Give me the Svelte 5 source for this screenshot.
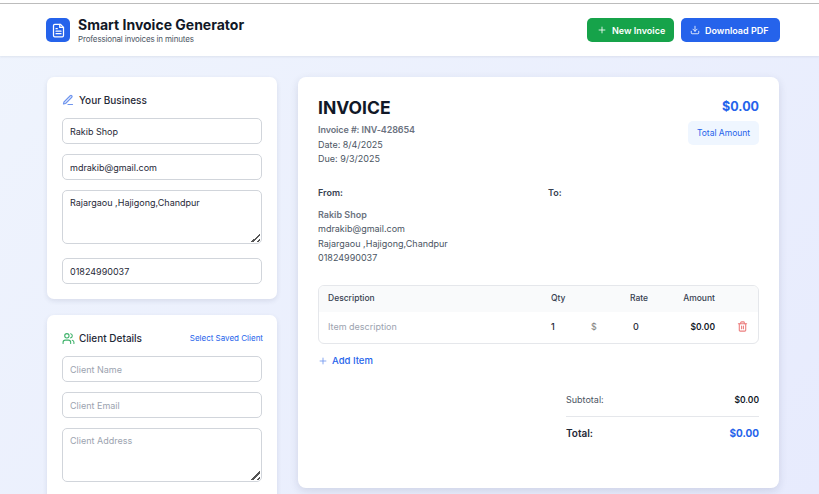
<script>
  const items = [{ description: '', qty: 1, rate: 0 }];
  const lines = ['mdrakib@gmail.com', 'Rajargaou ,Hajigong,Chandpur', '01824990037'];
</script>

<div class="page">
  <div class="topline"></div>
  <header>
    <div class="brand">
      <div class="logo">
        <svg viewBox="0 0 24 24" width="15" height="15" fill="none" stroke="#fff" stroke-width="2" stroke-linecap="round" stroke-linejoin="round"><path d="M15 2H6a2 2 0 0 0-2 2v16a2 2 0 0 0 2 2h12a2 2 0 0 0 2-2V7z"/><path d="M14 2v5h6"/><path d="M16 13H8"/><path d="M16 17H8"/><path d="M10 9H8"/></svg>
      </div>
      <div>
        <h1>Smart Invoice Generator</h1>
        <p>Professional invoices in minutes</p>
      </div>
    </div>
    <div class="actions">
      <button class="btn green">
        <svg viewBox="0 0 24 24" width="10" height="10" fill="none" stroke="currentColor" stroke-width="2" stroke-linecap="round"><path d="M12 5v14M5 12h14"/></svg>
        New Invoice
      </button>
      <button class="btn blue">
        <svg viewBox="0 0 24 24" width="10" height="10" fill="none" stroke="currentColor" stroke-width="2" stroke-linecap="round" stroke-linejoin="round"><path d="M21 15v4a2 2 0 0 1-2 2H5a2 2 0 0 1-2-2v-4"/><path d="M7 10l5 5 5-5"/><path d="M12 15V3"/></svg>
        Download PDF
      </button>
    </div>
  </header>

  <main>
    <aside>
      <section class="card">
        <h2>
          <svg viewBox="0 0 24 24" width="12" height="12" fill="none" stroke="#6f95ee" stroke-width="2.4" stroke-linecap="round" stroke-linejoin="round"><path d="M12 21h9"/><path d="M16.5 3.5a2.1 2.1 0 0 1 3 3L7 19l-4 1 1-4z"/></svg>
          Your Business
        </h2>
        <input value="Rakib Shop" />
        <input value="mdrakib@gmail.com" />
        <textarea>Rajargaou ,Hajigong,Chandpur</textarea>
        <input class="last" value="01824990037" />
      </section>

      <section class="card">
        <div class="client-head">
          <h2 class="tight">
            <svg viewBox="0 0 24 24" width="13" height="13" fill="none" stroke="#3fb26b" stroke-width="2" stroke-linecap="round" stroke-linejoin="round"><path d="M16 21v-2a4 4 0 0 0-4-4H6a4 4 0 0 0-4 4v2"/><circle cx="9" cy="7" r="4"/><path d="M22 21v-2a4 4 0 0 0-3-3.87"/><path d="M16 3.13a4 4 0 0 1 0 7.75"/></svg>
            Client Details
          </h2>
          <span class="link">Select Saved Client</span>
        </div>
        <input placeholder="Client Name" />
        <input placeholder="Client Email" />
        <textarea placeholder="Client Address"></textarea>
      </section>
    </aside>

    <article class="card invoice">
      <div class="inv-top">
        <div>
          <h3>INVOICE</h3>
          <div class="meta">
            <strong>Invoice #: INV-428654</strong>
            <span>Date: 8/4/2025</span>
            <span>Due: 9/3/2025</span>
          </div>
        </div>
        <div class="amount">
          <div class="big">$0.00</div>
          <div class="badge">Total Amount</div>
        </div>
      </div>

      <div class="parties">
        <div>
          <h4>From:</h4>
          <div class="addr">
            <strong>Rakib Shop</strong>
            {#each lines as line}<span>{line}</span>{/each}
          </div>
        </div>
        <div><h4>To:</h4></div>
      </div>

      <div class="table">
        <div class="row head">
          <span>Description</span><span>Qty</span><span class="rate-h">Rate</span><span class="r">Amount</span><span></span>
        </div>
        {#each items as item}
          <div class="row body">
            <span class="ph">Item description</span>
            <span class="qty">{item.qty}</span>
            <span class="rate"><i>$</i><b>{item.rate}</b></span>
            <span class="r amt">$0.00</span>
            <span class="trash">
              <svg viewBox="0 0 24 24" width="11" height="11" fill="none" stroke="#ec7f7f" stroke-width="2.4" stroke-linecap="round" stroke-linejoin="round"><path d="M3 6h18"/><path d="M19 6v14a2 2 0 0 1-2 2H7a2 2 0 0 1-2-2V6"/><path d="M8 6V4a2 2 0 0 1 2-2h4a2 2 0 0 1 2 2v2"/><path d="M10 11v6M14 11v6"/></svg>
            </span>
          </div>
        {/each}
      </div>

      <div class="add">
        <svg viewBox="0 0 24 24" width="10" height="10" fill="none" stroke="currentColor" stroke-width="2" stroke-linecap="round"><path d="M12 5v14M5 12h14"/></svg>
        Add Item
      </div>

      <div class="totals">
        <div class="sub"><span>Subtotal:</span><b>$0.00</b></div>
        <div class="total"><span>Total:</span><b>$0.00</b></div>
      </div>
    </article>
  </main>
</div>

<style>
  :global(body) {
    margin: 0;
    font-family: Inter, "Noto Sans", sans-serif;
    color: #1f2937;
    overflow: hidden;
  }
  .page {
    height: 494px;
    overflow: hidden;
    background: linear-gradient(135deg, #eff4fd, #e7ebfd);
  }
  .topline {
    height: 3px;
    background: #fff;
    border-bottom: 1px solid #bdbdbd;
  }
  header {
    height: 52px;
    box-sizing: border-box;
    background: #fff;
    box-shadow: 0 1px 2px rgba(30, 41, 59, 0.08);
    display: flex;
    align-items: center;
    justify-content: space-between;
    padding: 0 39px 0 46px;
  }
  .brand { display: flex; align-items: center; gap: 8px; }
  .logo {
    width: 24px;
    height: 24px;
    border-radius: 5px;
    background: #2563eb;
    display: flex;
    align-items: center;
    justify-content: center;
  }
  h1 {
    margin: 0;
    font-size: 14px;
    line-height: 16px;
    font-weight: 700;
    color: #111827;
  }
  header p {
    margin: 1px 0 0;
    font-size: 8px;
    letter-spacing: -0.02em;
    line-height: 10px;
    color: #4b5563;
  }
  .actions { display: flex; gap: 7px; }
  .btn {
    height: 24px;
    border: 0;
    border-radius: 5px;
    color: #fff;
    font: 600 9px Inter, sans-serif;
    display: flex;
    align-items: center;
    gap: 5px;
    box-sizing: border-box;
    white-space: nowrap;
  }
  .green { background: #16a34a; padding: 0 8px 0 10px; width: 87px; }
  .blue { background: #2563eb; padding: 0 9px; width: 99px; }
  main {
    display: flex;
    align-items: flex-start;
    gap: 21px;
    padding: 21px 40px 0 47px;
  }
  aside {
    width: 230px;
    flex: none;
    display: flex;
    flex-direction: column;
    gap: 16px;
  }
  .card {
    background: #fff;
    border-radius: 7px;
    box-shadow: 0 2px 5px rgba(30, 41, 80, 0.1);
  }
  aside .card {
    padding: 15px;
    display: flex;
    flex-direction: column;
  }
  h2 {
    margin: 0;
    height: 16px;
    font-size: 10px;
    font-weight: 500;
    line-height: 16px;
    color: #1f2937;
    display: flex;
    align-items: center;
    gap: 5px;
  }
  h2.tight { gap: 4px; }
  aside .card > h2 { margin-bottom: 10px; }
  .client-head {
    display: flex;
    align-items: center;
    justify-content: space-between;
    margin-bottom: 10px;
  }
  .link { font-size: 8px; color: #2563eb; margin-right: -1px; }
  input, textarea {
    display: block;
    box-sizing: border-box;
    width: 200px;
    margin: 0 0 10px;
    border: 1px solid #d1d5db;
    border-radius: 5px;
    padding: 0 7px;
    background: #fff;
    font: 400 9px Inter, sans-serif;
    color: #1f2937;
    outline: none;
  }
  input { height: 26px; }
  textarea {
    height: 54px;
    padding: 6px 7px;
    line-height: 12px;
    margin-bottom: 14px;
  }
  textarea::-webkit-resizer {
    background:
      linear-gradient(135deg, transparent 50%, #555 50%, #555 62%, transparent 62%, transparent 78%, #555 78%, #555 90%, transparent 90%) right 1px bottom 1px / 9px 9px no-repeat;
  }
  input::placeholder, textarea::placeholder { color: #9ca3af; opacity: 1; }
  input.last { margin-bottom: 0; }
  .invoice {
    flex: 1;
    height: 411px;
    box-sizing: border-box;
    padding: 20px;
    border-radius: 8px;
    box-shadow: 0 3px 8px rgba(30, 41, 80, 0.13);
  }
  .inv-top { display: flex; justify-content: space-between; }
  h3 {
    margin: 0;
    font-size: 17.5px;
    line-height: 22px;
    font-weight: 700;
    color: #111827;
  }
  .meta {
    display: flex;
    flex-direction: column;
    margin-top: 4px;
    font-size: 9px;
    line-height: 14.5px;
    color: #4b5563;
  }
  .meta strong { font-weight: 600; color: #6b7280; letter-spacing: -0.01em; }
  .amount { display: flex; flex-direction: column; align-items: flex-end; }
  .big {
    font-size: 12.5px;
    line-height: 20px;
    font-weight: 700;
    color: #2563eb;
    margin-top: 0;
  }
  .badge {
    margin-top: 4px;
    height: 24px;
    width: 71px;
    border-radius: 5px;
    background: #eff6ff;
    color: #2563eb;
    font-size: 8.5px;
    line-height: 24px;
    text-align: center;
  }
  .parties {
    display: grid;
    grid-template-columns: 230px 1fr;
    margin-top: 20px;
  }
  h4 {
    margin: 0;
    font-size: 9px;
    line-height: 12px;
    font-weight: 600;
    color: #374151;
  }
  .addr {
    display: flex;
    flex-direction: column;
    margin-top: 9px;
    font-size: 9px;
    line-height: 14.5px;
    color: #4b5563;
  }
  .addr strong { font-weight: 600; color: #6b7280; }
  .table {
    margin-top: 19px;
    border: 1px solid #e5e7eb;
    border-radius: 6px;
    overflow: hidden;
  }
  .row {
    display: grid;
    grid-template-columns: 223px 40px 48px 1fr 43px;
    align-items: center;
    padding-left: 9px;
    font-size: 8.5px;
    box-sizing: border-box;
    padding-bottom: 1px;
  }
  .head {
    height: 26px;
    background: #f9fafb;
    font-weight: 500;
    color: #374151;
  }
  .rate-h { padding-left: 39px; }
  .body { height: 31px; }
  .r { text-align: right; }
  .ph { color: #9ca3af; font-size: 9px; }
  .qty { font-weight: 500; font-size: 9px; color: #1f2937; }
  .rate { display: flex; font-size: 9px; }
  .rate i { font-style: normal; color: #808080; width: 42px; }
  .rate b { font-weight: 500; }
  .amt { font-weight: 600; font-size: 8.5px; color: #111827; }
  .trash { display: flex; justify-content: flex-end; padding-right: 10px; }
  .add {
    margin-top: 11px;
    display: flex;
    align-items: center;
    gap: 4px;
    font-size: 9.5px;
    line-height: 12px;
    font-weight: 500;
    color: #2563eb;
  }
  .add svg { color: #6f95ee; }
  .totals { margin: 17px 0 0 248px; }
  .sub, .total { display: flex; justify-content: space-between; align-items: center; }
  .sub {
    height: 32px;
    border-bottom: 1px solid #e5e7eb;
    font-size: 9px;
    color: #4b5563;
  }
  .sub b { font-weight: 600; font-size: 8.5px; color: #111827; }
  .total {
    height: 32px;
    font-size: 10px;
    font-weight: 600;
    color: #1f2937;
  }
  .total b { font-weight: 700; color: #2563eb; }
</style>
